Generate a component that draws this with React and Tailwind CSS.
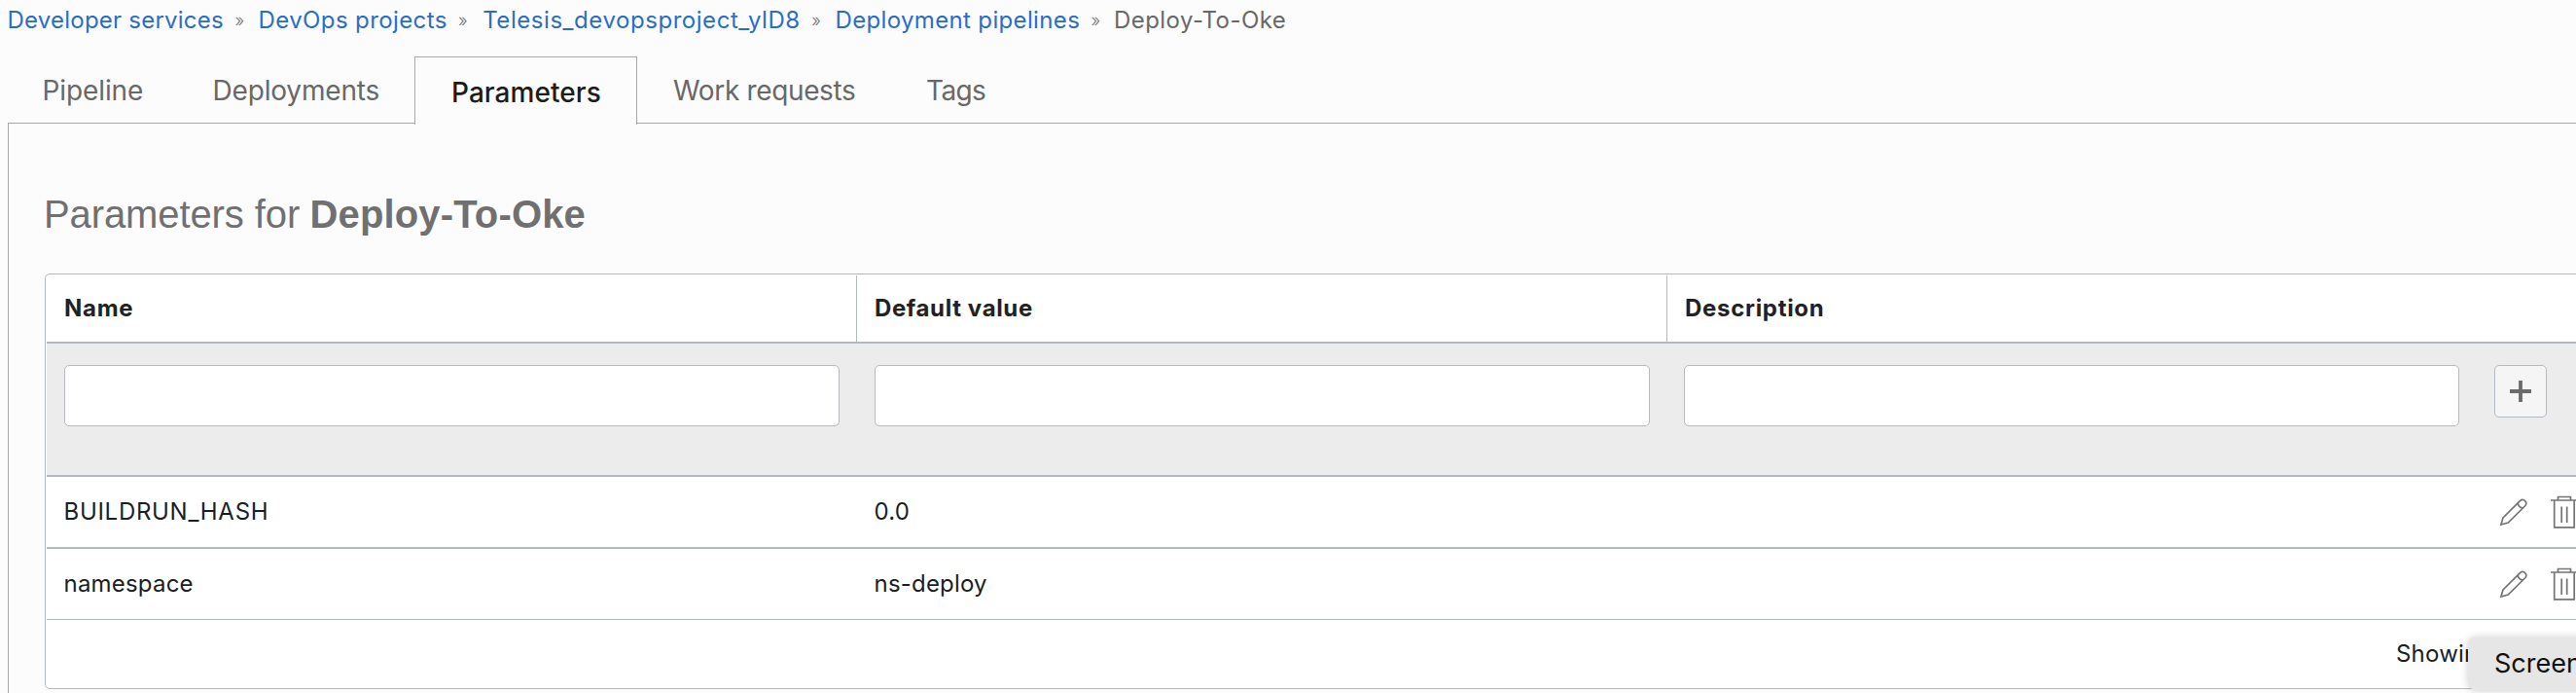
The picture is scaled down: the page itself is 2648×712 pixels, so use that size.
const crumbs = [
  { label: "Developer services", box: "w-[234px] tracking-[0.23px]", sep: "w-[24px]" },
  { label: "DevOps projects", box: "w-[205.5px] tracking-[0.4px]", sep: "w-[25.2px]" },
  { label: "Telesis_devopsproject_ylD8", box: "w-[338px] tracking-[0.55px]", sep: "w-[24.3px]" },
  { label: "Deployment pipelines", box: "w-[263px] tracking-[0.35px]", sep: "w-[23.6px]" },
];

const rows = [
  { name: "BUILDRUN_HASH", track: "tracking-[0.7px]", value: "0.0", line: "border-b-2 h-[74px]" },
  { name: "namespace", track: "tracking-[0.2px]", value: "ns-deploy", line: "border-b h-[73px]" },
];

function PencilIcon() {
  return (
    <svg className="ml-[17px] h-[30px] w-[30px] shrink-0" viewBox="0 0 30 30" fill="none" stroke="#747474" strokeWidth="1.7">
      <path d="M1.9 28.1 L4 21 L21.7 3.3 A3.7 3.7 0 0 1 26.9 8.5 L9.2 26 Z" strokeLinejoin="miter" />
      <path d="M19.3 5.8 A5 5 0 0 0 24.4 10.9" />
    </svg>
  );
}

function TrashIcon() {
  return (
    <svg className="ml-[22px] h-[34px] w-[30px] shrink-0" viewBox="0 0 30 34" fill="none" stroke="#747474" strokeWidth="1.7">
      <path d="M1 5 H29 M8.5 5 V1.5 H21.5 V5 M4.7 5 V32.8 H25.2 V5 M12.2 11.5 V28 M17.7 11.5 V28" />
    </svg>
  );
}

function Field({ className }) {
  return <input className={`h-[63px] shrink-0 rounded-[5px] border border-[#b7bac0] bg-white ${className}`} />;
}

function Tab({ className, children }) {
  return <div className={`flex h-[68px] shrink-0 items-center pt-[2px] whitespace-nowrap ${className}`}>{children}</div>;
}

export default function App() {
  return (
    <div className="relative h-[712px] w-full overflow-hidden bg-[#fcfcfc] font-['Inter',sans-serif] text-[24px] text-[#1a1f25]">
      <nav className="flex h-[41px] items-center pl-[7.5px] whitespace-nowrap">
        {crumbs.map((c) => (
          <div key={c.label} className="flex shrink-0 items-center">
            <a className={`shrink-0 text-[#2a6dc9] ${c.box}`}>{c.label}</a>
            <span className={`shrink-0 text-[18px] leading-none font-light text-[#747474] ${c.sep}`}>»</span>
          </div>
        ))}
        <span className="tracking-[0.42px] text-[#686868]">Deploy-To-Oke</span>
      </nav>

      <div className="flex h-[85px] items-end text-[28px] text-[#686868]">
        <Tab className="w-[218px] pl-[43.5px] tracking-[-0.1px]">Pipeline</Tab>
        <Tab className="w-[208px] pl-[0.5px] tracking-[-0.17px]">Deployments</Tab>
        <div className="relative z-10 -mb-[2px] flex h-[70px] w-[229px] shrink-0 items-center border border-b-0 border-[#a8a8a8] bg-[#fcfcfc] pt-[3px] pl-[37px] font-medium tracking-[0.05px] text-[#1c1c1c]">
          Parameters
        </div>
        <Tab className="w-[297px] pl-[37px] tracking-[-0.35px]">Work requests</Tab>
        <Tab className="tracking-[-0.6px]">Tags</Tab>
      </div>

      <section className="ml-[8px] h-[586px] w-[2760px] border-t border-l border-[#a8a8a8] pt-[68px]">
        <h1 className="flex h-[50px] items-center pl-[36px] font-['Liberation_Sans',sans-serif] text-[40px] leading-[48px] whitespace-nowrap text-[#707070]">
          <span className="w-[273.5px] tracking-[-0.1px]">Parameters for</span>
          <strong className="font-bold tracking-[0.15px]">Deploy-To-Oke</strong>
        </h1>

        <div className="mt-[36px] ml-[37px] h-[427px] w-[2640px] rounded-[5px] border border-[#b4b8bf] bg-white pl-px">
          <div className="flex h-[71px] border-b-2 border-[#b4b8bf] pt-px font-bold text-[#222222]">
            <div className="flex w-[833px] items-center border-r border-[#b4b8bf] pl-[18px] tracking-[0.7px]">Name</div>
            <div className="flex w-[833px] items-center border-r border-[#b4b8bf] pl-[18px] tracking-[0.62px]">Default value</div>
            <div className="flex items-center pl-[18px] tracking-[0.7px]">Description</div>
          </div>

          <div className="flex h-[137px] items-start border-b-2 border-[#b4b8bf] bg-[#ececec] pt-[22px] pl-[18px]">
            <Field className="w-[797px]" />
            <Field className="ml-[36px] w-[797px]" />
            <Field className="ml-[35px] w-[797px]" />
            <button className="ml-[36px] flex h-[54px] w-[54px] shrink-0 items-center justify-center rounded-[5px] border border-[#b4bac4] bg-[#f5f5f5]">
              <svg className="h-6 w-6" viewBox="0 0 24 24" stroke="#6b6b6b" strokeWidth="3.8">
                <path d="M12 1 V23 M1 12 H23" />
              </svg>
            </button>
          </div>

          {rows.map((r) => (
            <div key={r.name} className={`flex items-center border-[#b4b8bf] whitespace-nowrap ${r.line}`}>
              <div className={`w-[833px] shrink-0 pl-[17.5px] ${r.track}`}>{r.name}</div>
              <div className="w-[833px] shrink-0 pl-[17.5px] tracking-[0.2px]">{r.value}</div>
              <div className="w-[838px] shrink-0" />
              <PencilIcon />
              <TrashIcon />
            </div>
          ))}

          <div className="flex h-[70px] items-center pl-[2415px] tracking-[0.2px] whitespace-nowrap">Showin</div>
        </div>
      </section>

      <div className="absolute top-[655px] left-[2537px] z-20 flex h-[54px] w-[220px] items-center rounded-[8px] bg-[#e6e6e6] pl-[27px] text-[27px] text-[#111111] shadow-[0_0_8px_rgba(0,0,0,0.2)]">
        Screen
      </div>
    </div>
  );
}
